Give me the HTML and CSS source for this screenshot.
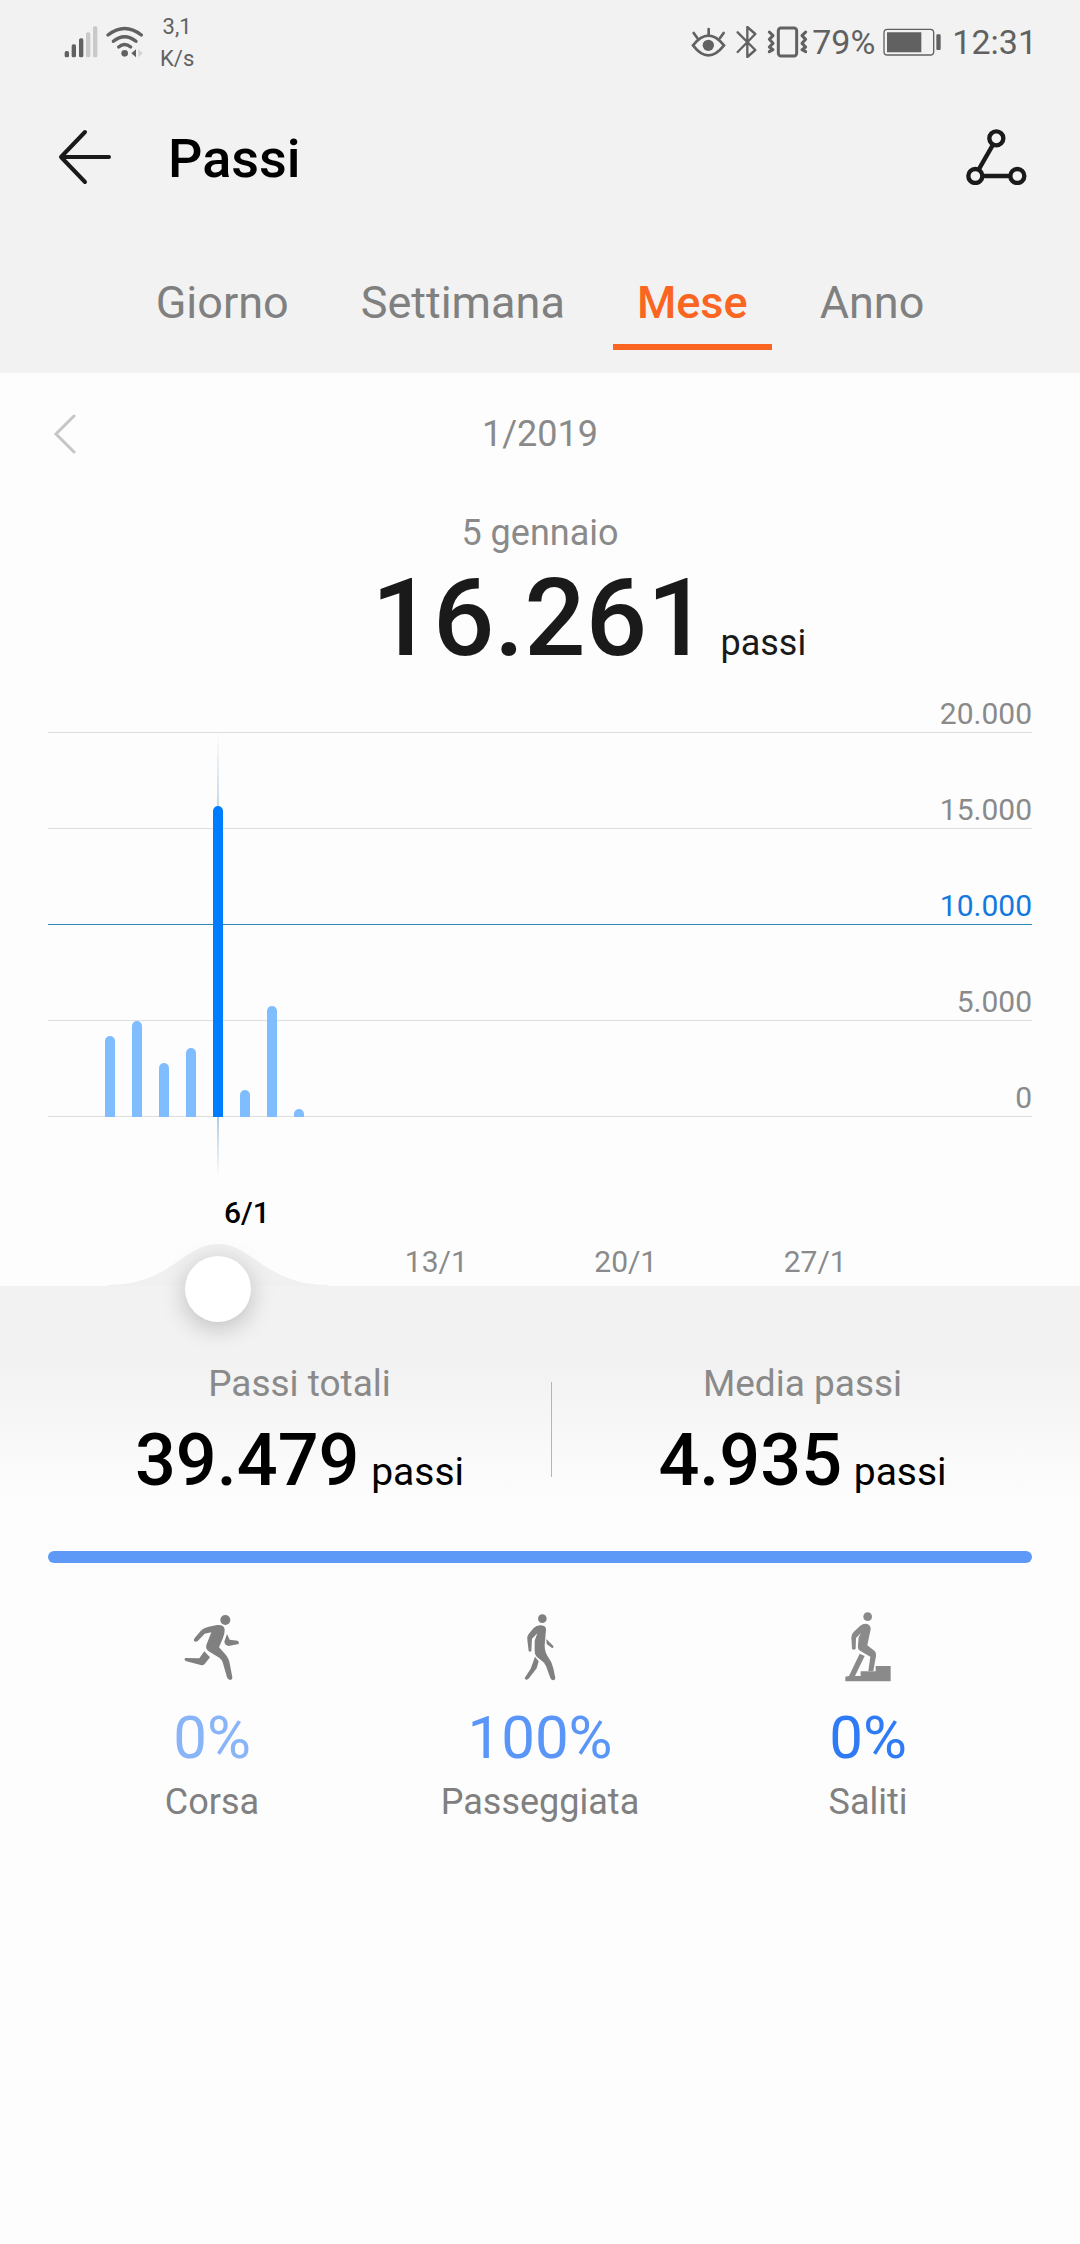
FILE: index.html
```html
<!DOCTYPE html>
<html lang="it">
<head>
<meta charset="utf-8">
<meta name="viewport" content="width=device-width, initial-scale=1">
<title>Passi</title>
<link rel="stylesheet" href="styles.css">
</head>
<body>
<header class="top">
  <div class="status">
    <div class="status-group">
      <svg class="ico-signal" viewBox="72 78 102 96" width="34" height="32" aria-hidden="true">
        <g fill="#616161"><rect x="74" y="153" width="13" height="19" rx="5"/><rect x="95" y="133" width="13" height="39" rx="5"/><rect x="117" y="115" width="13" height="57" rx="5"/></g>
        <g fill="#c9c9c9"><rect x="138" y="97" width="13" height="75" rx="5"/><rect x="159" y="79" width="13" height="93" rx="5"/></g>
      </svg>
      <svg class="ico-wifi" viewBox="198 78 114 96" width="38" height="32" aria-hidden="true">
        <g fill="none" stroke="#616161" stroke-width="10" stroke-linecap="round"><path d="M204 105Q254 66 304 105"/><path d="M220 124Q254 96 288 124"/><path d="M236 141Q254 126 272 141"/></g>
        <circle cx="254" cy="160" r="10" fill="#616161"/><path d="M288 148v24l-14-12z" fill="#616161"/><path d="M295 148v24l13-12z" fill="#d2d2d2"/>
      </svg>
      <div class="rate"><span>3,1</span><span>K/s</span></div>
    </div>
    <div class="status-group status-right">
      <svg class="ico-eye" viewBox="96 78 105 96" width="35" height="32" aria-hidden="true">
        <g fill="none" stroke="#616161" stroke-width="8" stroke-linecap="round"><path d="M102 136Q148 78 195 136Q148 196 102 136z"/><path d="M149 87v17M104 99l11 15M194 99l-11 15"/></g><circle cx="148" cy="136" r="17" fill="#616161"/>
      </svg>
      <svg class="ico-bt" viewBox="231 78 63 96" width="21" height="32" aria-hidden="true"><path d="M236 97L289 150L265 171V81L289 102L236 156" fill="none" stroke="#616161" stroke-width="7" stroke-linejoin="round" stroke-linecap="round"/></svg>
      <svg class="ico-vibrate" viewBox="324 78 123 96" width="41" height="32" aria-hidden="true"><g fill="none" stroke="#616161" stroke-width="9" stroke-linejoin="round" stroke-linecap="round"><rect x="358" y="84" width="55" height="84" rx="8"/><path d="M331 96l11 11-11 11 11 12-11 11 11 8-11 6M440 96l-11 11 11 11-11 12 11 11-11 8 11 6"/></g></svg>
      <span>79%</span>
      <svg class="ico-battery" viewBox="678 78 177 96" width="59" height="32" aria-hidden="true"><rect x="681" y="88" width="149" height="77" rx="10" fill="none" stroke="#616161" stroke-width="4"/><path d="M690 97h103v60H690zM841 103h7q3 0 3 4v39q0 4-3 4h-7q-3 0-3-4v-39q0-4 3-4z" fill="#616161"/></svg>
      <time>12:31</time>
    </div>
  </div>
  <div class="bar">
    <button class="icon-btn" aria-label="Indietro"><svg viewBox="0 0 54 56" width="54" height="56"><path d="M27 3L3 28L27 53M3 28H51" fill="none" stroke="#1a1a1a" stroke-width="4" stroke-linecap="round" stroke-linejoin="round"/></svg></button>
    <h1>Passi</h1>
    <button class="icon-btn" aria-label="Condividi"><svg viewBox="917 386 183 168" width="61" height="56"><g fill="none" stroke="#1a1a1a" stroke-width="13"><circle cx="1008" cy="414" r="21"/><circle cx="945" cy="527" r="21"/><circle cx="1071" cy="527" r="21"/><path d="M998 433L955 508M966 527h84"/></g></svg></button>
  </div>
  <nav class="tabs">
    <button class="tab">Giorno</button>
    <button class="tab">Settimana</button>
    <button class="tab active" aria-current="page">Mese</button>
    <button class="tab">Anno</button>
  </nav>
</header>
<main>
  <div class="period">
    <button class="icon-btn" aria-label="Mese precedente"><svg viewBox="0 0 36 40" width="36" height="40"><path d="M26 2L8 20L26 38" fill="none" stroke="#c6c6c6" stroke-width="3" stroke-linecap="round"/></svg></button>
    <span>1/2019</span>
  </div>
  <section class="summary">
    <p class="day">5 gennaio</p>
    <p class="count"><strong>16.261</strong><span>passi</span></p>
  </section>
  <section class="chart" aria-label="Passi al giorno">
    <div class="lines">
      <div>20.000</div><div>15.000</div><div class="goal">10.000</div><div>5.000</div><div>0</div>
    </div>
    <div class="bars days">
      <i style="height:21%"></i><i style="height:25%"></i><i style="height:14%"></i><i style="height:18%"></i>
      <span class="cursor"></span><i class="on" style="height:81%"></i>
      <i style="height:7%"></i><i style="height:29%"></i><i style="height:2%"></i>
    </div>
  </section>
  <div class="axis days">
    <span class="d6">6/1</span><span class="d13">13/1</span><span class="d20">20/1</span><span class="d27">27/1</span>
    <svg class="bump" viewBox="0 0 220 42" width="220" height="42" aria-hidden="true"><path d="M0 42V41C62 41 76 0 110 0S158 41 220 41V42z" fill="#f0f0f0"/></svg>
    <input class="picker" type="range" min="1" max="31" value="5" aria-label="Giorno del mese">
  </div>
  <section class="totals">
    <div class="total"><p>Passi totali</p><p class="value"><strong>39.479</strong> passi</p></div>
    <div class="total"><p>Media passi</p><p class="value"><strong>4.935</strong> passi</p></div>
  </section>
  <section class="split">
    <div class="meter"></div>
    <div class="kinds">
      <div class="kind run">
        <svg viewBox="123 66 174 210" width="58" height="70" fill="#808080" aria-hidden="true"><circle cx="250" cy="90" r="15"/><path d="M178 121Q185 113 200 110L225 105Q246 103 248 118Q249 130 243 144L231 172L250 193Q261 205 264 225L271 262Q271 270 264 270Q258 270 255 262L242 217Q240 209 232 203L200 184Q190 177 193 165L208 127L188 131L168 152Q160 158 156 152Q155 149 158 144z"/><path d="M255 132L263 149L287 152Q293 156 290 162L260 168Q249 166 247 155z"/><path d="M187 184L204 202L188 222Q183 227 176 225L133 214Q124 209 130 204L172 205z"/></svg>
        <strong>0%</strong><span>Corsa</span>
      </div>
      <div class="kind walk">
        <svg viewBox="1113 66 174 210" width="58" height="70" fill="#808080" aria-hidden="true"><circle cx="1207" cy="86" r="13"/><path d="M1181 114Q1190 105 1203 106Q1219 107 1218 120L1214 165Q1214 185 1222 197Q1236 215 1240 235L1246 264Q1245 271 1240 271Q1234 271 1231 264L1218 228Q1215 220 1207 214L1190 200Q1183 193 1184 180L1184 152L1192 130L1176 146L1174 183Q1170 187 1166 183L1162 150Q1161 138 1166 132z"/><path d="M1185 200L1196 214L1190 235L1165 267Q1156 273 1154 264L1172 236z"/><path d="M1219 147L1240 168Q1242 175 1236 174L1220 162z"/></svg>
        <strong>100%</strong><span>Passeggiata</span>
      </div>
      <div class="kind climb">
        <svg viewBox="838 786 174 210" width="58" height="70" fill="#8a8a8a" aria-hidden="true"><circle cx="924" cy="800" r="13"/><path d="M901 828Q911 820 922 822Q934 826 933 838L923 886L944 902Q951 908 949 918L941 963H926L932 920L901 902Q893 897 895 885L897 862L905 848L889 864L888 897Q882 902 877 897L875 862Q875 852 882 846z"/><path d="M900 911L915 918L886 978H903V964H948V948H993V994H857V980L868 978z"/></svg>
        <strong>0%</strong><span>Saliti</span>
      </div>
    </div>
  </section>
</main>
</body>
</html>
```
FILE: styles.css
```css
* { box-sizing: border-box; }
body {
  margin: 0;
  min-height: 100vh;
  background: #fdfdfd;
  color: #000;
  font-family: Roboto, "Liberation Sans", sans-serif;
}
h1, p { margin: 0; }
svg { display: block; flex: none; }
button {
  border: 0;
  padding: 0;
  background: none;
  color: inherit;
  font: inherit;
}

/* header */
.top { background: #f2f2f2; }
.status {
  display: flex;
  justify-content: space-between;
  height: 84px;
  padding: 0 43px 0 64px;
  color: #616161;
  font-size: 34px;
}
.status-group { display: flex; align-items: center; gap: 8px; }
.rate {
  display: flex;
  flex-direction: column;
  margin-left: 8px;
  padding-top: 2px;
  font-size: 22px;
  line-height: 32px;
  text-align: center;
}
.ico-bt { margin: 0 2px; }
.status-right span { margin-left: -4px; }
.status-right time { margin-left: 2px; }
.bar {
  display: flex;
  align-items: center;
  height: 146px;
  padding: 0 53px 0 58px;
}
.bar h1 {
  flex: 1;
  margin-left: 56px;
  padding-top: 4px;
  font-size: 54px;
  font-weight: 500;
  line-height: 64px;
}
.tabs {
  display: flex;
  justify-content: center;
  gap: 24px;
  padding: 45px 0 23px;
}
.tab {
  padding: 0 24px 13px;
  border-bottom: 6px solid transparent;
  color: #808080;
  font-size: 45px;
  line-height: 56px;
}
.tab.active { border-color: #fb6522; color: #fb6522; font-weight: 500; }

/* selected period and day */
.period {
  display: grid;
  grid-template-columns: 1fr auto 1fr;
  align-items: center;
  height: 122px;
  padding: 0 48px;
  color: #8a8a8a;
  font-size: 36px;
}
.period .icon-btn { justify-self: start; }
.summary { padding-top: 14px; text-align: center; }
.day { color: #8a8a8a; font-size: 36px; line-height: 48px; }
.count {
  display: grid;
  grid-template-columns: 1fr auto 1fr;
  align-items: baseline;
  color: #1a1a1a;
  font-size: 36px;
  line-height: 48px;
}
.count strong {
  grid-column: 2;
  font-size: 108px;
  font-weight: 500;
  line-height: 122px;
}
.count span { margin-left: 12px; text-align: left; }

/* chart */
.chart { display: grid; margin: 6px 48px 0; }
.lines, .bars { grid-area: 1 / 1; }
.lines {
  display: grid;
  grid-template-rows: 48px repeat(4, 96px);
  color: #8a8a8a;
  font-size: 30px;
  line-height: 36px;
  text-align: right;
}
.lines div {
  display: flex;
  align-items: flex-end;
  justify-content: flex-end;
  border-bottom: 1px solid #dedede;
}
.lines .goal { border-color: #2f86b8; color: #1478e0; }
.days {
  display: grid;
  grid-template-columns: repeat(31, minmax(0, 1fr));
  justify-items: center;
}
.bars {
  position: relative;
  align-self: end;
  align-items: end;
  grid-template-rows: 100%;
  height: 384px;
  padding: 0 97px 0 48px;
}
.bars i {
  grid-row: 1;
  width: 10px;
  border-radius: 5px 5px 0 0;
  background: #80bdff;
}
.bars .on { position: relative; grid-column: 5; background: #007dff; }
.cursor {
  position: absolute;
  grid-column: 5 / 6;
  top: 0;
  bottom: -60px;
  left: 50%;
  width: 2px;
  margin-left: -1px;
  background: linear-gradient(transparent, #a9c6dc 25%, #a9c6dc 85%, transparent);
}
.axis {
  position: relative;
  grid-template-rows: 36px 36px;
  row-gap: 13px;
  padding: 78px 143px 6px 98px;
  color: #8a8a8a;
  font-size: 30px;
  line-height: 36px;
  white-space: nowrap;
}
.axis span { grid-row: 2; }
.axis .d6 { grid-area: 1 / 6; color: #000; font-weight: 500; }
.d13 { grid-column: 13; }
.d20 { grid-column: 20; }
.d27 { grid-column: 27; }
.bump {
  position: absolute;
  grid-column: 5 / 6;
  bottom: 0;
  left: 50%;
  margin-left: -112px;
}
.picker {
  position: absolute;
  right: 125px;
  bottom: -36px;
  left: 77px;
  width: auto;
  height: 66px;
  margin: 0;
  appearance: none;
  background: none;
}
.picker::-webkit-slider-thumb {
  appearance: none;
  width: 66px;
  height: 66px;
  border-radius: 50%;
  background: #fff;
  box-shadow: 0 6px 24px rgba(0, 0, 0, 0.22);
}

/* totals */
.totals {
  display: grid;
  grid-template-columns: 1fr 1fr;
  padding: 74px 26px 29px 48px;
  background: linear-gradient(#f2f2f2 30%, #fdfdfd 80%);
  text-align: center;
}
.total { color: #8a8a8a; font-size: 37px; line-height: 48px; }
.total + .total { background: linear-gradient(#b5b5b5, #b5b5b5) 0 22px / 1px 95px no-repeat; }
.value { padding-top: 14px; color: #000; font-size: 39px; line-height: 100px; }
.value strong {
  margin-right: 2px;
  font-size: 72px;
  font-weight: 500;
  line-height: 72px;
}

/* activity split */
.split { padding: 0 48px 48px; }
.meter { height: 12px; border-radius: 6px; background: #5e99f8; }
.kinds {
  display: grid;
  grid-template-columns: repeat(3, 1fr);
  padding-top: 49px;
}
.kind {
  display: flex;
  flex-direction: column;
  align-items: center;
  color: #808080;
  font-size: 36px;
  line-height: 48px;
}
.kind strong {
  margin-top: 16px;
  font-size: 60px;
  font-weight: 400;
  line-height: 80px;
}
.run strong { color: #8ab4f8; }
.walk strong { color: #5a96f8; }
.climb strong { color: #2f7af5; }
```
